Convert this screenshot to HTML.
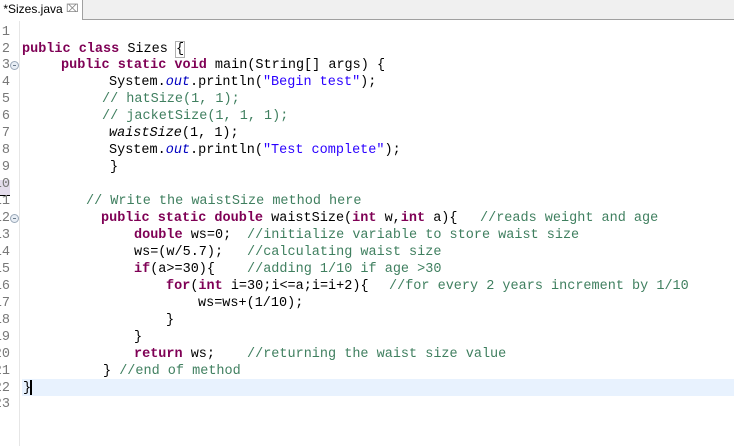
<!DOCTYPE html>
<html><head><meta charset="utf-8"><style>
body{margin:0;width:734px;height:446px;overflow:hidden;background:#fff;position:relative;font-family:"Liberation Mono",monospace;}
.tabbar{position:absolute;left:0;top:0;width:734px;height:20px;}
.tab{position:absolute;left:0;top:0;width:82px;height:20px;background:#fff;font-family:"Liberation Sans",sans-serif;font-size:12px;color:#000;line-height:19px;white-space:nowrap;overflow:hidden;}
.rest{position:absolute;left:82px;top:0;right:0;height:19px;background:#f0f0f0;border-left:1px solid #a0a0a0;border-bottom:1px solid #a0a0a0;}
.gutline{position:absolute;left:19px;top:21px;width:1px;height:425px;background:#e6e6e6;}
.ln{position:absolute;right:724px;font-size:13.5px;color:#787878;line-height:17px;white-space:pre;}
.c{position:absolute;font-size:13.5px;line-height:17px;white-space:pre;color:#000;}
.k{color:#7f0055;font-weight:bold;}
.m{color:#3f7f5f;}
.s{color:#2a00ff;}
.f{color:#0000c0;font-style:italic;}
.i{font-style:italic;}
.fold{position:absolute;left:10px;width:9px;height:9px;border-radius:50%;border:1px solid #9aa8b8;background:#e8eef5;box-sizing:border-box;}
.fold:after{content:"";position:absolute;left:2px;top:3px;width:3px;height:1px;background:#6a7a8a;}
</style></head><body>
<div class="tabbar"><div class="tab">&nbsp;*Sizes.java<span style="position:absolute;left:66px;top:0;color:#888;font-size:11px">&#x2327;</span></div><div class="rest"></div></div>
<div class="gutline"></div>
<div style="position:absolute;left:22px;top:379px;width:712px;height:17px;background:#e8f2fe"></div>
<div style="position:absolute;left:0;top:180px;width:10px;height:15px;background:#e4dcec"></div>
<div style="position:absolute;left:0;top:195px;width:10px;height:1px;background:#000"></div>

<div class="ln" style="top:23.5px">1</div>
<div class="ln" style="top:40.5px">2</div>
<div class="ln" style="top:57.4px">3</div>
<div class="ln" style="top:74.4px">4</div>
<div class="ln" style="top:91.3px">5</div>
<div class="ln" style="top:108.3px">6</div>
<div class="ln" style="top:125.2px">7</div>
<div class="ln" style="top:142.2px">8</div>
<div class="ln" style="top:159.1px">9</div>
<div class="ln" style="top:176.1px">10</div>
<div class="ln" style="top:193px">11</div>
<div class="ln" style="top:210px">12</div>
<div class="ln" style="top:226.9px">13</div>
<div class="ln" style="top:243.9px">14</div>
<div class="ln" style="top:260.8px">15</div>
<div class="ln" style="top:277.8px">16</div>
<div class="ln" style="top:294.7px">17</div>
<div class="ln" style="top:311.7px">18</div>
<div class="ln" style="top:328.6px">19</div>
<div class="ln" style="top:345.6px">20</div>
<div class="ln" style="top:362.5px">21</div>
<div class="ln" style="top:379.5px">22</div>
<div class="ln" style="top:396.4px">23</div>
<div class="fold" style="top:61px"></div>
<div class="fold" style="top:214px"></div>

<div class="c" style="left:22px;top:40.5px"><span class="k">public class</span> Sizes <span style="outline:1px solid #b0b0b0">{</span></div>
<div class="c" style="left:61px;top:57.4px"><span class="k">public static void</span> main(String[] args) {</div>
<div class="c" style="left:109px;top:74.4px">System.<span class="f">out</span>.println(<span class="s">"Begin test"</span>);</div>
<div class="c m" style="left:102px;top:91.3px">// hatSize(1, 1);</div>
<div class="c m" style="left:102px;top:108.3px">// jacketSize(1, 1, 1);</div>
<div class="c" style="left:109px;top:125.2px"><span class="i">waistSize</span>(1, 1);</div>
<div class="c" style="left:109px;top:142.2px">System.<span class="f">out</span>.println(<span class="s">"Test complete"</span>);</div>
<div class="c" style="left:110px;top:159.1px">}</div>
<div class="c m" style="left:86px;top:193px">// Write the waistSize method here</div>
<div class="c" style="left:101px;top:210px"><span class="k">public static double</span> waistSize(<span class="k">int</span> w,<span class="k">int</span> a){</div>
<div class="c m" style="left:480px;top:210px">//reads weight and age</div>
<div class="c" style="left:134px;top:226.9px"><span class="k">double</span> ws=0;</div>
<div class="c m" style="left:247px;top:226.9px">//initialize variable to store waist size</div>
<div class="c" style="left:134px;top:243.9px">ws=(w/5.7);</div>
<div class="c m" style="left:247px;top:243.9px">//calculating waist size</div>
<div class="c" style="left:134px;top:260.8px"><span class="k">if</span>(a&gt;=30){</div>
<div class="c m" style="left:247px;top:260.8px">//adding 1/10 if age &gt;30</div>
<div class="c" style="left:166px;top:277.8px"><span class="k">for</span>(<span class="k">int</span> i=30;i&lt;=a;i=i+2){</div>
<div class="c m" style="left:389px;top:277.8px">//for every 2 years increment by 1/10</div>
<div class="c" style="left:198px;top:294.7px">ws=ws+(1/10);</div>
<div class="c" style="left:166px;top:311.7px">}</div>
<div class="c" style="left:134px;top:328.6px">}</div>
<div class="c" style="left:134px;top:345.6px"><span class="k">return</span> ws;</div>
<div class="c m" style="left:247px;top:345.6px">//returning the waist size value</div>
<div class="c" style="left:103px;top:362.5px">} <span class="m">//end of method</span></div>
<div class="c" style="left:23px;top:379.5px">}</div>
<div style="position:absolute;left:30px;top:380px;width:2px;height:15px;background:#000"></div>
</body></html>
